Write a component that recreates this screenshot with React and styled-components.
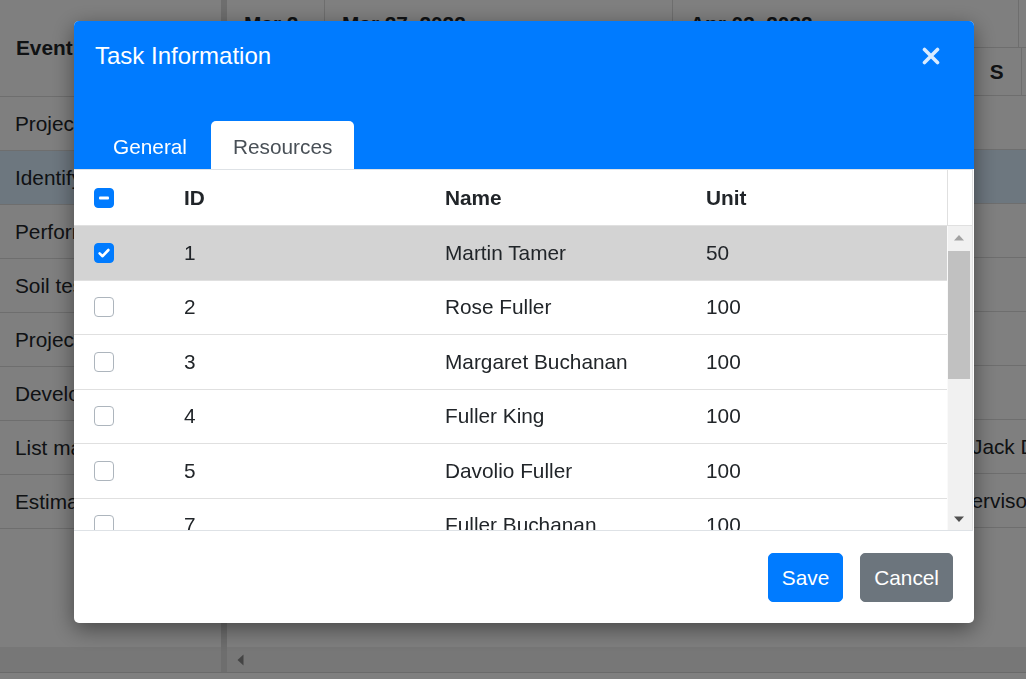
import React from "react";
import styled, { createGlobalStyle } from "styled-components";

const GlobalStyle = createGlobalStyle`
  html, body {
    margin: 0;
    padding: 0;
    background: #fff;
    font-family: "Liberation Sans", Arial, sans-serif;
    color: #212529;
  }
  * { box-sizing: border-box; }
`;

const FONT = "20.8px";

const tasks = [
  { name: "Project initiation" },
  { name: "Identify site location", selected: true },
  { name: "Perform soil test" },
  { name: "Soil test approval" },
  { name: "Project estimation" },
  { name: "Develop floor plan for estimation" },
  { name: "List materials", label: "Jack Davolio", offset: 745 },
  { name: "Estimation approval", label: "Construction Supervisor", offset: 585 },
];

const weeks = [
  { label: "Mar 20, 2022", width: 98 },
  { label: "Mar 27, 2022", width: 348 },
  { label: "Apr 03, 2022", width: 346 },
  { label: "Apr 10, 2022", width: 348 },
];

const days = ["F", "S", "S", "M", "T", "W", "T", "F", "S", "S", "M", "T", "W", "T", "F", "S", "S"];

const resources = [
  { id: 1, name: "Martin Tamer", unit: 50, checked: true },
  { id: 2, name: "Rose Fuller", unit: 100 },
  { id: 3, name: "Margaret Buchanan", unit: 100 },
  { id: 4, name: "Fuller King", unit: 100 },
  { id: 5, name: "Davolio Fuller", unit: 100 },
  { id: 7, name: "Fuller Buchanan", unit: 100 },
  { id: 8, name: "Jack Davolio", unit: 100 },
  { id: 9, name: "Tamer Vinet", unit: 100 },
  { id: 10, name: "Vinet Fuller", unit: 100 },
  { id: 11, name: "Bergs Anton", unit: 100 },
  { id: 12, name: "Construction Supervisor", unit: 100 },
];

/* ---------- background gantt ---------- */

const Page = styled.div`
  display: flex;
  flex-direction: column;
  height: 679px;
  width: 1026px;
  overflow: hidden;
  font-size: ${FONT};
`;

const Panes = styled.div`
  display: flex;
  flex: 1;
  min-height: 0;
  border-bottom: 1px solid #d4d4d4;
`;

const LeftPane = styled.div`
  width: 221px;
  display: flex;
  flex-direction: column;
  overflow: hidden;
`;

const Splitter = styled.div`
  width: 6px;
  background: #dcdcdc;
`;

const ChartPane = styled.div`
  flex: 1;
  display: flex;
  flex-direction: column;
  overflow: hidden;
`;

const GridHeader = styled.div`
  height: 97px;
  display: flex;
  align-items: center;
  padding-left: 16px;
  font-weight: 700;
  white-space: nowrap;
  border-bottom: 1px solid #dcdcdc;
`;

const TaskRow = styled.div`
  height: 54px;
  display: flex;
  align-items: center;
  padding-left: 15px;
  white-space: nowrap;
  background: ${(p) => (p.$selected ? "#dbeeff" : "#fff")};
  border-bottom: 1px solid #dcdcdc;
`;

const Spacer = styled.div`
  flex: 1;
`;

const HScroll = styled.div`
  height: 25px;
  display: flex;
  align-items: center;
  padding-left: 10px;
  background: #eeeeee;
`;

const TimeRow = styled.div`
  height: 48px;
  display: flex;
  white-space: nowrap;
  border-bottom: 1px solid #dcdcdc;
`;

const WeekCell = styled.div`
  flex: none;
  width: ${(p) => p.$width}px;
  padding: 0 25px 0 17px;
  display: flex;
  align-items: center;
  font-weight: 700;
  border-right: 1px solid #dcdcdc;
`;

const WeekText = styled.span`
  overflow: hidden;
  white-space: nowrap;
`;

const DayCell = styled.div`
  flex: none;
  width: 49.7px;
  display: flex;
  align-items: center;
  justify-content: center;
  font-weight: 700;
  border-right: 1px solid #dcdcdc;
`;

const ChartRow = styled.div`
  height: 54px;
  display: flex;
  align-items: center;
  white-space: nowrap;
  background: ${(p) => (p.$selected ? "#dbeeff" : "#fff")};
  border-bottom: 1px solid #dcdcdc;
`;

const BarLabel = styled.span`
  margin-left: ${(p) => p.$offset}px;
`;

const BottomGap = styled.div`
  height: 6px;
`;

/* ---------- dialog ---------- */

const Overlay = styled.div`
  position: fixed;
  inset: 0;
  background: rgba(0, 0, 0, 0.5);
  display: flex;
  align-items: flex-start;
  padding: 21px 0 0 74px;
`;

const Dialog = styled.div`
  width: 900px;
  background: #fff;
  border-radius: 5px;
  overflow: hidden;
  box-shadow: 0 6px 22px rgba(0, 0, 0, 0.45);
  font-size: ${FONT};
  color: #212529;
`;

const Header = styled.div`
  height: 148px;
  background: #007bff;
  display: flex;
  flex-direction: column;
`;

const TitleRow = styled.div`
  display: flex;
  align-items: center;
  padding: 17px 34px 0 21px;
`;

const Title = styled.div`
  flex: 1;
  font-size: 24px;
  line-height: 36px;
  color: #fff;
`;

const CloseButton = styled.button`
  border: 0;
  padding: 0;
  background: transparent;
  width: 18px;
  height: 18px;
  display: flex;
  cursor: pointer;
`;

const TabList = styled.div`
  margin-top: auto;
  display: flex;
  gap: 2px;
  padding-left: 17px;
`;

const Tab = styled.div`
  height: 48px;
  line-height: 48px;
  padding: 2px 22px 0;
  border-radius: 5px 5px 0 0;
  color: ${(p) => (p.$active ? "#495057" : "#fff")};
  background: ${(p) => (p.$active ? "#fff" : "transparent")};
`;

const Grid = styled.div`
  border-top: 1px solid #dee2e6;
  border-bottom: 1px solid #dee2e6;
  border-right: 1px solid #e0e0e0;
  margin-right: 1px;
`;

const cols = "90px 261px 261px 261px";

const HeadRow = styled.div`
  height: 56px;
  display: grid;
  grid-template-columns: ${cols} 1fr;
  border-bottom: 1px solid #e0e0e0;
  font-weight: 700;
`;

const Cell = styled.div`
  display: flex;
  align-items: center;
  padding-left: 20px;
  white-space: nowrap;
`;

const ScrollHeadCell = styled.div`
  border-left: 1px solid #e0e0e0;
`;

const Body = styled.div`
  height: 304px;
  display: flex;
`;

const Rows = styled.div`
  flex: 1;
  overflow: hidden;
`;

const Row = styled.div`
  height: 54.5px;
  display: grid;
  grid-template-columns: ${cols};
  border-bottom: 1px solid #e0e0e0;
  background: ${(p) => (p.$selected ? "#d3d3d3" : "#fff")};
`;

const ScrollBar = styled.div`
  width: 25px;
  background: #f1f1f1;
  border-left: 1px solid #fafafa;
  display: flex;
  flex-direction: column;
  padding-right: 2px;
`;

const ScrollArrow = styled.div`
  height: 22px;
  display: flex;
  align-items: center;
  justify-content: center;
  flex: none;
`;

const Thumb = styled.div`
  height: 128px;
  margin-top: 3px;
  background: #c1c1c1;
`;

const Box = styled.span`
  width: 20px;
  height: 20px;
  border-radius: 4px;
  display: inline-flex;
  align-items: center;
  justify-content: center;
  border: 1px solid ${(p) => (p.$on ? "#007bff" : "#adb5bd")};
  background: ${(p) => (p.$on ? "#007bff" : "#fff")};
`;

const Footer = styled.div`
  height: 92px;
  display: flex;
  justify-content: flex-end;
  align-items: flex-start;
  gap: 17px;
  padding: 22px 21px 0;
`;

const Button = styled.button`
  height: 49px;
  padding: 0 13px;
  border: 1px solid ${(p) => (p.$primary ? "#007bff" : "#6c757d")};
  border-radius: 5px;
  background: ${(p) => (p.$primary ? "#007bff" : "#6c757d")};
  color: #fff;
  font-family: inherit;
  font-size: ${FONT};
  cursor: pointer;
`;

const Checkbox = ({ state }) => (
  <Box $on={state !== "off"}>
    {state === "on" && (
      <svg width="14" height="14" viewBox="0 0 14 14">
        <path d="M2.6 7.4 L5.6 10.2 L11.4 4" fill="none" stroke="#fff" strokeWidth="2.6" strokeLinecap="round" strokeLinejoin="round" />
      </svg>
    )}
    {state === "mixed" && (
      <svg width="14" height="14" viewBox="0 0 14 14">
        <rect x="2" y="5.4" width="10" height="3.2" rx="1" fill="#fff" />
      </svg>
    )}
  </Box>
);

const Triangle = ({ up, color }) => (
  <svg width="12" height="7" viewBox="0 0 12 7">
    <path d={up ? "M1 6.5 L6 1 L11 6.5 Z" : "M1 0.5 L6 6 L11 0.5 Z"} fill={color} />
  </svg>
);

const Background = () => (
  <Page>
    <Panes>
      <LeftPane>
        <GridHeader>Event Name</GridHeader>
        {tasks.map((t, i) => (
          <TaskRow key={i} $selected={t.selected}>
            {t.name}
          </TaskRow>
        ))}
        <Spacer />
        <HScroll />
      </LeftPane>
      <Splitter />
      <ChartPane>
        <TimeRow>
          {weeks.map((w) => (
            <WeekCell key={w.label} $width={w.width}>
              <WeekText>{w.label}</WeekText>
            </WeekCell>
          ))}
        </TimeRow>
        <TimeRow>
          {days.map((d, i) => (
            <DayCell key={i}>{d}</DayCell>
          ))}
        </TimeRow>
        {tasks.map((t, i) => (
          <ChartRow key={i} $selected={t.selected}>
            {t.label && <BarLabel $offset={t.offset}>{t.label}</BarLabel>}
          </ChartRow>
        ))}
        <Spacer />
        <HScroll>
          <svg width="7" height="12" viewBox="0 0 7 12">
            <path d="M6.5 0.5 L0.5 6 L6.5 11.5 Z" fill="#888" />
          </svg>
        </HScroll>
      </ChartPane>
    </Panes>
    <BottomGap />
  </Page>
);

export default function App() {
  return (
    <>
      <GlobalStyle />
      <Background />
      <Overlay>
        <Dialog>
          <Header>
            <TitleRow>
              <Title>Task Information</Title>
              <CloseButton aria-label="Close">
                <svg width="18" height="18" viewBox="0 0 18 18">
                  <path d="M2.5 2.5 L15.5 15.5 M15.5 2.5 L2.5 15.5" stroke="rgba(255,255,255,0.85)" strokeWidth="3.6" strokeLinecap="round" />
                </svg>
              </CloseButton>
            </TitleRow>
            <TabList>
              <Tab>General</Tab>
              <Tab $active>Resources</Tab>
            </TabList>
          </Header>
          <Grid>
            <HeadRow>
              <Cell>
                <Checkbox state="mixed" />
              </Cell>
              <Cell>ID</Cell>
              <Cell>Name</Cell>
              <Cell>Unit</Cell>
              <ScrollHeadCell />
            </HeadRow>
            <Body>
              <Rows>
                {resources.map((r) => (
                  <Row key={r.id} $selected={r.checked}>
                    <Cell>
                      <Checkbox state={r.checked ? "on" : "off"} />
                    </Cell>
                    <Cell>{r.id}</Cell>
                    <Cell>{r.name}</Cell>
                    <Cell>{r.unit}</Cell>
                  </Row>
                ))}
              </Rows>
              <ScrollBar>
                <ScrollArrow>
                  <Triangle up color="#a3a3a3" />
                </ScrollArrow>
                <Thumb />
                <Spacer />
                <ScrollArrow>
                  <Triangle color="#505050" />
                </ScrollArrow>
              </ScrollBar>
            </Body>
          </Grid>
          <Footer>
            <Button $primary>Save</Button>
            <Button>Cancel</Button>
          </Footer>
        </Dialog>
      </Overlay>
    </>
  );
}
